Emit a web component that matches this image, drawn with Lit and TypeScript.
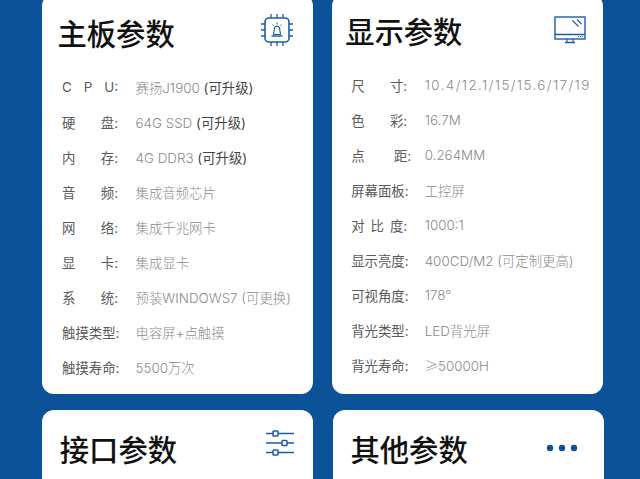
import { LitElement, html, css, svg } from "lit";
import { customElement } from "lit/decorators.js";

type Row = { l: string[]; v: unknown; d?: string; wide?: boolean; spaced?: boolean };

const left: Row[] = [
  { l: ["C", "P", "U:"], v: "赛扬J1900", d: " (可升级)" },
  { l: ["硬", "盘:"], v: "64G SSD", d: " (可升级)" },
  { l: ["内", "存:"], v: "4G DDR3", d: " (可升级)" },
  { l: ["音", "频:"], v: "集成音频芯片" },
  { l: ["网", "络:"], v: "集成千兆网卡" },
  { l: ["显", "卡:"], v: "集成显卡" },
  { l: ["系", "统:"], v: "预装WINDOWS7 (可更换)" },
  { l: ["触摸类型:"], v: "电容屏+点触摸" },
  { l: ["触摸寿命:"], v: "5500万次" },
];
const right: Row[] = [
  { l: ["尺", "寸:"], v: "10.4/12.1/15/15.6/17/19", spaced: true },
  { l: ["色", "彩:"], v: "16.7M" },
  { l: ["点", "距:"], v: "0.264MM", wide: true },
  { l: ["屏幕面板:"], v: "工控屏" },
  { l: ["对", "比", "度:"], v: "1000:1" },
  { l: ["显示亮度:"], v: "400CD/M2 (可定制更高)" },
  { l: ["可视角度:"], v: "178°" },
  { l: ["背光类型:"], v: "LED背光屏" },
  { l: ["背光寿命:"], v: html`<span class="cjk">≥</span>50000H` },
];

const chip = svg`<svg class="icon chip" width="34" height="34" viewBox="0 0 34 34" fill="none" stroke="#1b5ea6">
  <rect x="5" y="5" width="24" height="24" rx="4" stroke-width="1.6"/>
  <path stroke-width="1.3" d="M11 1v4M17 1v4M23 1v4M11 29v4M17 29v4M23 29v4M1 11h4M1 17h4M1 23h4M29 11h4M29 17h4M29 23h4"/>
  <path stroke-width="1.1" d="M13.5 21.5l1-6.5a2.6 2.6 0 0 1 5 0l1 6.5z"/>
  <path stroke-width="1.4" d="M11.5 23h11"/>
  <path stroke-width="1" d="M17 9.5v1.8M12.5 11.5l1.2 1.2M21.5 11.5l-1.2 1.2"/>
</svg>`;

const monitor = svg`<svg class="icon" width="32" height="28" viewBox="0 0 32 28" fill="none" stroke="#1b5ea6">
  <rect x="1" y="1" width="30" height="22" stroke-width="1.4"/>
  <path stroke-width="1.4" d="M1 18.5h30M11 26.5h10"/>
  <path stroke-width="1.2" d="M13 23v3.5M19 23v3.5"/>
  <path stroke-width="1.1" d="M18.5 4.5l6 6M23 3.5l4.5 4.5"/>
  <path stroke-width="1" d="M24 20.7h5" stroke-dasharray="1.2 0.7"/>
</svg>`;

const sliders = svg`<svg class="icon sliders" width="30" height="26" viewBox="0 0 30 26" fill="none" stroke="#1b5ea6" stroke-width="1.5">
  <path d="M1 3.5h7M13 3.5h16M1 13h16M22 13h7M1 22.500h7M13 22.500h16"/>
  <rect x="8" y="1" width="5" height="5" rx="0.8"/>
  <rect x="17" y="10.500" width="5" height="5" rx="0.8"/>
  <rect x="8" y="20" width="5" height="5" rx="0.8"/>
</svg>`;

const dots = svg`<svg class="icon" width="32" height="8" viewBox="0 0 32 8" fill="#0b5298">
  <circle cx="4" cy="4" r="3.200"/><circle cx="16" cy="4" r="3.200"/><circle cx="28" cy="4" r="3.200"/>
</svg>`;

@customElement("app-root")
export class AppRoot extends LitElement {
  static styles = css`
    :host {
      display: block;
      width: 640px;
      height: 479px;
      overflow: hidden;
      background: #0b5298;
      font-family: Inter, "Noto Sans CJK SC", sans-serif;
    }
    .top {
      display: flex;
      gap: 19.500px;
      padding-left: 41.500px;
      margin-top: -6px;
      height: 399.500px;
    }
    .bottom {
      display: flex;
      gap: 19.500px;
      padding-left: 42.300px;
      margin-top: 16.500px;
    }
    .card {
      width: 271.200px;
      background: #fff;
      border-radius: 12px;
      box-sizing: border-box;
      display: flex;
      flex-direction: column;
    }
    .bottom .card { height: 120px; }
    .head {
      display: flex;
      align-items: center;
      justify-content: space-between;
      height: 40px;
    }
    .title {
      font-family: "Noto Sans CJK SC", sans-serif;
      font-size: 29.300px;
      line-height: 40px;
      color: #111;
      font-weight: 500;
      white-space: nowrap;
    }
    .c1 { padding: 18px 19px 0 16px; }
    .c2 { padding: 16px 17.500px 0 13px; }
    .c3 { padding: 18px 18px 0 17.500px; }
    .c4 { padding: 18px 26px 0 17.500px; }
    .chip { margin-bottom: 4px; }
    .sliders { margin-bottom: 11px; }
    .rows {
      display: flex;
      flex-direction: column;
      margin-top: 17px;
      padding-left: 4.500px;
    }
    .c2 .rows { padding-left: 6px; margin-top: 17.500px; }
    .row {
      display: flex;
      height: 35px;
      align-items: center;
      font-size: 13.400px;
      white-space: nowrap;
    }
    .label {
      width: 56px;
      display: flex;
      justify-content: space-between;
      color: #5a5a5a;
      flex: none;
    }
    .row.wide .label span:last-child { margin-right: -4px; }
    .value {
      margin-left: 17.500px;
      color: #8a8a8a;
      font-weight: 300;
    }
    .spaced { letter-spacing: 1.400px; }
    .cjk { font-family: "Noto Sans CJK SC", sans-serif; }
    .dark { color: #444; font-weight: 400; }
    .icon { display: block; flex: none; }
  `;

  private rows(items: Row[]) {
    return html`<div class="rows">
      ${items.map(
        (r) => html`<div class="row ${r.wide ? "wide" : ""}">
          <div class="label">${r.l.map((t) => html`<span>${t}</span>`)}</div>
          <div class="value ${r.spaced ? "spaced" : ""}">${r.v}${r.d ? html`<span class="dark">${r.d}</span>` : ""}</div>
        </div>`
      )}
    </div>`;
  }

  render() {
    return html`
      <div class="top">
        <section class="card c1">
          <div class="head"><div class="title">主板参数</div>${chip}</div>
          ${this.rows(left)}
        </section>
        <section class="card c2">
          <div class="head"><div class="title">显示参数</div>${monitor}</div>
          ${this.rows(right)}
        </section>
      </div>
      <div class="bottom">
        <section class="card c3">
          <div class="head"><div class="title">接口参数</div>${sliders}</div>
        </section>
        <section class="card c4">
          <div class="head"><div class="title">其他参数</div>${dots}</div>
        </section>
      </div>
    `;
  }
}
